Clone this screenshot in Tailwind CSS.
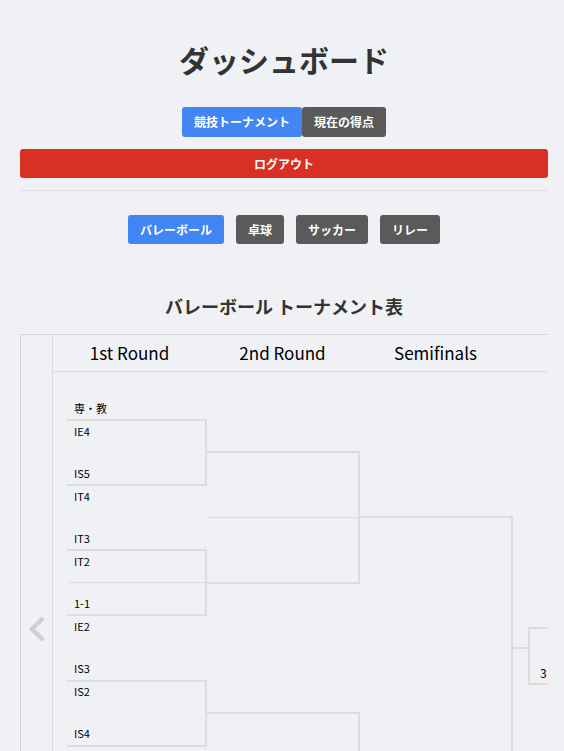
<!DOCTYPE html>
<html lang="ja">
<head>
<meta charset="utf-8">
<meta name="viewport" content="width=device-width, initial-scale=1">
<title>ダッシュボード</title>
<script src="https://cdn.jsdelivr.net/npm/@tailwindcss/browser@4"></script>
</head>
<body class="h-screen overflow-hidden bg-[#f0f1f5] font-['Noto_Sans_CJK_JP',sans-serif] text-black">
<main class="flex flex-col pt-9 pr-4 pl-5">
  <h1 class="text-center text-[30px] leading-[47px] font-bold text-[#333]">ダッシュボード</h1>

  <nav class="mt-6 flex justify-center text-xs font-bold text-white" aria-label="表示切り替え">
    <button type="button" class="h-[30px] rounded-[3px] bg-[#4285f4] px-3">競技トーナメント</button>
    <button type="button" class="h-[30px] rounded-[3px] bg-[#5a5a5a] px-3">現在の得点</button>
  </nav>
  <button type="button" class="mt-3 h-[29px] rounded-[3px] bg-[#d93025] text-xs font-bold text-white">ログアウト</button>
  <hr class="mt-3 border-[#dedfe2]">

  <nav class="mt-6 flex justify-center gap-3 text-xs font-bold text-white" aria-label="競技">
    <button type="button" class="h-[29px] rounded-[3px] bg-[#4285f4] px-3">バレーボール</button>
    <button type="button" class="h-[29px] rounded-[3px] bg-[#5a5a5a] px-3">卓球</button>
    <button type="button" class="h-[29px] rounded-[3px] bg-[#5a5a5a] px-3">サッカー</button>
    <button type="button" class="h-[29px] rounded-[3px] bg-[#5a5a5a] px-3">リレー</button>
  </nav>

  <h2 class="mt-12 text-center text-lg leading-7 font-bold text-[#333]">バレーボール トーナメント表</h2>

  <section class="mt-3.5 flex min-h-[588px] overflow-hidden border-t border-l border-[#d3d5d7]" aria-label="トーナメント表">
    <button type="button" aria-label="前へ" class="flex w-8 shrink-0 items-center justify-center border-r border-[#dadbdc]">
      <svg class="h-[26px] w-4" viewBox="0 0 16 26" fill="none" stroke="#cfd0d1" stroke-width="4.500"><path d="M14.200 2 3 13l11.200 11"/></svg>
    </button>
    <div class="min-w-0 flex-1">
      <div class="flex h-[37px] items-center border-b border-[#dadbdc] text-center text-[17px]">
        <h3 class="w-[153px] shrink-0">1st Round</h3>
        <h3 class="w-[153px] shrink-0">2nd Round</h3>
        <h3 class="w-[153px] shrink-0">Semifinals</h3>
      </div>
      <div class="relative pt-[27px] pl-[21px]">
        <svg class="absolute top-0 left-0 h-[530px] w-[500px]" viewBox="0 0 500 530" fill="none" stroke="#dcdddd" stroke-width="2" aria-hidden="true">
          <path d="M14 48h139v65H14M14 178h139v65H14M14 309h139v65H14"/>
          <path d="M154 80h152v131H154M154 341h152v131H154"/>
          <path d="M307 145h152v262H307"/>
          <path d="M460 276h16M500 256h-24v56h24"/>
          <path stroke-width="1" d="M154 145.500h151M16 210.500h136"/>
        </svg>
        <ul class="relative flex w-32 flex-col text-[11px] leading-[19px]">
          <li>専・教</li>
          <li class="mt-1">IE4</li>
          <li class="mt-[23px]">IS5</li>
          <li class="mt-1">IT4</li>
          <li class="mt-[23px]">IT3</li>
          <li class="mt-1">IT2</li>
          <li class="mt-[23px]">1-1</li>
          <li class="mt-1">IE2</li>
          <li class="mt-[23px]">IS3</li>
          <li class="mt-1">IS2</li>
          <li class="mt-[23px]">IS4</li>
        </ul>
        <span class="absolute top-[291px] left-[487px] text-xs leading-5">3</span>
      </div>
    </div>
  </section>
</main>
</body>
</html>
